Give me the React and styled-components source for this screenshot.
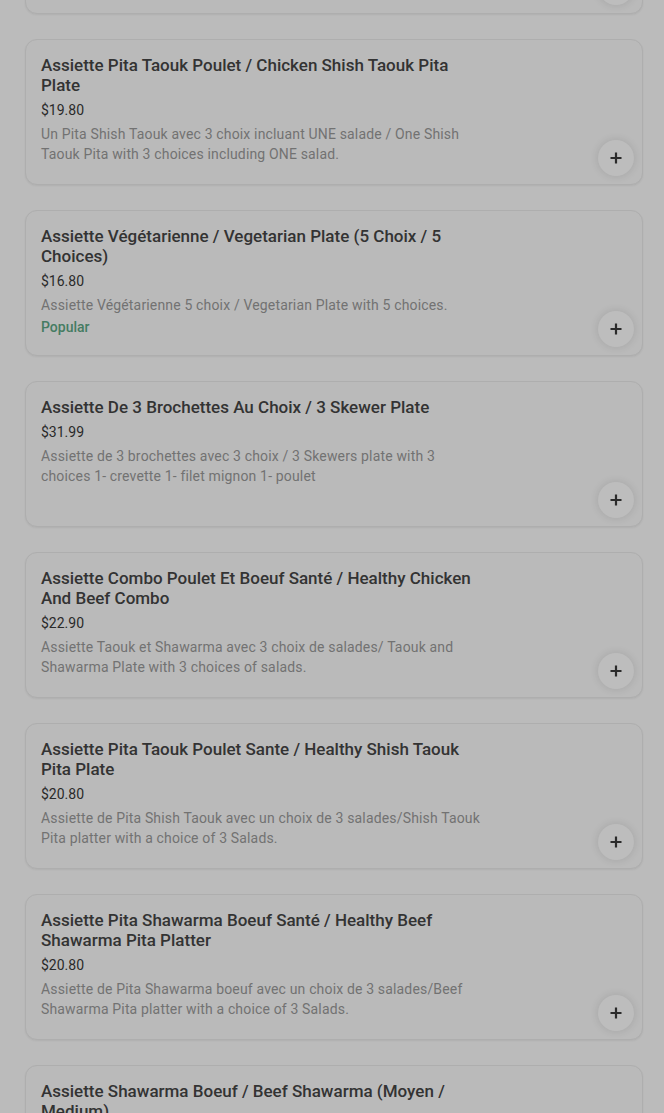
import styled, { createGlobalStyle } from "styled-components";

const GlobalStyle = createGlobalStyle`
  html, body {
    margin: 0;
    padding: 0;
    background: #bbbbbb;
    overflow: hidden;
  }
  body {
    font-family: Roboto, "Noto Sans", Arial, sans-serif;
  }
`;

const items = [
  {
    title: "Assiette Shish Taouk / Chicken Shish Taouk Plate",
    price: "$18.80",
    desc: "Assiette de Shish Taouk avec 3 choix / Shish Taouk plate with 3 choices.",
  },
  {
    title: "Assiette Pita Taouk Poulet / Chicken Shish Taouk Pita Plate",
    price: "$19.80",
    desc: "Un Pita Shish Taouk avec 3 choix incluant UNE salade / One Shish Taouk Pita with 3 choices including ONE salad.",
  },
  {
    title: "Assiette Végétarienne / Vegetarian Plate (5 Choix / 5 Choices)",
    price: "$16.80",
    desc: "Assiette Végétarienne 5 choix / Vegetarian Plate with 5 choices.",
    popular: true,
  },
  {
    title: "Assiette De 3 Brochettes Au Choix / 3 Skewer Plate",
    price: "$31.99",
    desc: "Assiette de 3 brochettes avec 3 choix / 3 Skewers plate with 3 choices 1- crevette 1- filet mignon 1- poulet",
  },
  {
    title: "Assiette Combo Poulet Et Boeuf Santé / Healthy Chicken And Beef Combo",
    price: "$22.90",
    desc: "Assiette Taouk et Shawarma avec 3 choix de salades/ Taouk and Shawarma Plate with 3 choices of salads.",
  },
  {
    title: "Assiette Pita Taouk Poulet Sante / Healthy Shish Taouk Pita Plate",
    price: "$20.80",
    desc: "Assiette de Pita Shish Taouk avec un choix de 3 salades/Shish Taouk Pita platter with a choice of 3 Salads.",
  },
  {
    title: "Assiette Pita Shawarma Boeuf Santé / Healthy Beef Shawarma Pita Platter",
    price: "$20.80",
    desc: "Assiette de Pita Shawarma boeuf avec un choix de 3 salades/Beef Shawarma Pita platter with a choice of 3 Salads.",
  },
  {
    title: "Assiette Shawarma Boeuf / Beef Shawarma (Moyen / Medium)",
    price: "$19.80",
    desc: "Assiette de Shawarma boeuf avec 3 choix / Beef Shawarma plate with 3 choices.",
  },
];

const List = styled.ul`
  list-style: none;
  margin: -132px 0 0;
  padding: 0 21px 0 25px;
  display: flex;
  flex-direction: column;
  gap: 25px;
`;

const Card = styled.li`
  position: relative;
  box-sizing: border-box;
  height: 146px;
  padding: 15px 15px;
  border: 1px solid #aeaeae;
  border-radius: 12px;
  background: #bababa;
  box-shadow: 0 1px 2px rgba(0, 0, 0, 0.06);
`;

const Info = styled.div`
  max-width: 442px;
  display: flex;
  flex-direction: column;
`;

const Title = styled.h3`
  margin: 0 0 5px;
  font-size: 17px;
  line-height: 20px;
  font-weight: 500;
  color: #333333;
`;

const Price = styled.div`
  font-size: 14px;
  line-height: 20px;
  color: #2a2a2a;
  margin-bottom: 4px;
`;

const Desc = styled.p`
  margin: 0;
  font-size: 14px;
  line-height: 20px;
  letter-spacing: 0.16px;
  color: #727272;
`;

const Badge = styled.span`
  margin-top: 2px;
  font-size: 14px;
  line-height: 20px;
  font-weight: 500;
  color: #457c62;
`;

const AddButton = styled.button`
  position: absolute;
  right: 8px;
  bottom: 8px;
  width: 36px;
  height: 36px;
  border: none;
  border-radius: 50%;
  background: #bdbdbd;
  box-shadow: 0 0 8px rgba(0, 0, 0, 0.12);
  display: flex;
  align-items: center;
  justify-content: center;
  padding: 0;
  cursor: pointer;
`;

const PlusIcon = () => (
  <svg width="14" height="14" viewBox="0 0 14 14">
    <path d="M7 1.5v11M1.5 7h11" stroke="#2b2b2b" strokeWidth="2.2" />
  </svg>
);

export default function App() {
  return (
    <>
      <GlobalStyle />
      <List>
        {items.map((item, i) => (
          <Card key={i}>
            <Info>
              <Title>{item.title}</Title>
              <Price>{item.price}</Price>
              <Desc>{item.desc}</Desc>
              {item.popular && <Badge>Popular</Badge>}
            </Info>
            <AddButton aria-label="Add">
              <PlusIcon />
            </AddButton>
          </Card>
        ))}
      </List>
    </>
  );
}
